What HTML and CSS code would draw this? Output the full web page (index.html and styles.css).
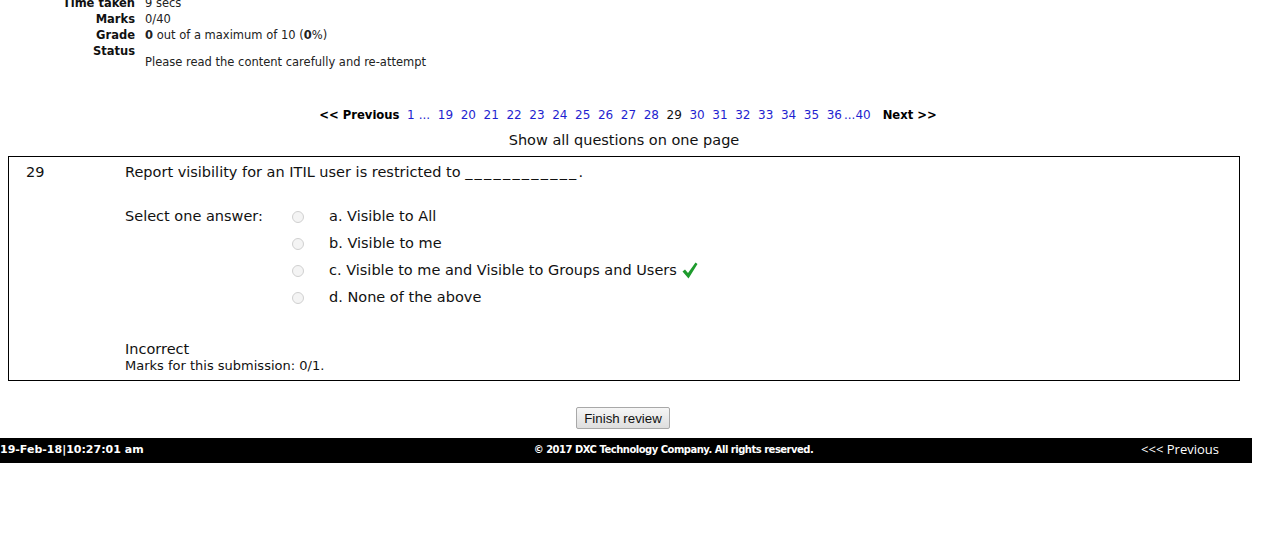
FILE: index.html
```html
<!DOCTYPE html>
<html>
<head>
<meta charset="utf-8">
<link rel="stylesheet" href="styles.css">
</head>
<body>
<div class="page">
  <div class="summary">
    <div class="lbl">Time taken</div><div class="val">9 secs</div>
    <div class="lbl">Marks</div><div class="val">0/40</div>
    <div class="lbl">Grade</div><div class="val"><b>0</b> out of a maximum of 10 (<b>0</b>%)</div>
    <div class="lbl">Status</div><div class="val status">Please read the content carefully and re-attempt</div>
  </div>

  <div class="paging">
    <span class="nav">&lt;&lt; Previous</span>
    <a class="pg">1</a><span class="dots">...</span>
    <a class="pg">19</a><a class="pg">20</a><a class="pg">21</a><a class="pg">22</a><a class="pg">23</a><a class="pg">24</a><a class="pg">25</a><a class="pg">26</a><a class="pg">27</a><a class="pg">28</a><span class="pg cur">29</span><a class="pg">30</a><a class="pg">31</a><a class="pg">32</a><a class="pg">33</a><a class="pg">34</a><a class="pg">35</a><a class="pg">36</a><span class="dots tail">...</span><a class="pg last">40</a>
    <span class="nav next">Next &gt;&gt;</span>
  </div>
  <div class="showall">Show all questions on one page</div>

  <div class="qbox">
    <div class="qnum">29</div>
    <div class="qbody">
      <div class="qtext">Report visibility for an ITIL user is restricted to <span class="blank">____________</span>.</div>
      <div class="answers">
        <div class="prompt">Select one answer:</div>
        <div class="opts">
          <div class="opt"><span class="radio"></span><span class="otext">a. Visible to All</span></div>
          <div class="opt"><span class="radio"></span><span class="otext">b. Visible to me</span></div>
          <div class="opt"><span class="radio"></span><span class="otext">c. Visible to me and Visible to Groups and Users</span>
            <svg class="tick" width="16" height="17" viewBox="0 0 16 17"><path d="M0.5 9.5 L3 7.5 L6 11 L13.5 0.5 L15.5 2 L6.5 16.5 Z" fill="#1e9b2d"/></svg>
          </div>
          <div class="opt"><span class="radio"></span><span class="otext">d. None of the above</span></div>
        </div>
      </div>
      <div class="result">Incorrect</div>
      <div class="marks">Marks for this submission: 0/1.</div>
    </div>
  </div>

  <div class="finish"><button class="btn">Finish review</button></div>
</div>
<div class="footer">
  <div class="fdate">19-Feb-18|10:27:01 am</div>
  <div class="fcopy">© 2017 DXC Technology Company. All rights reserved.</div>
  <div class="fprev">&lt;&lt;&lt; Previous</div>
</div>
</body>
</html>
```

FILE: styles.css
```css
html, body {
  margin: 0;
  padding: 0;
  background: #fff;
}
body {
  font-family: "DejaVu Sans", Verdana, sans-serif;
  color: #111;
  overflow: hidden;
}
.page {
  width: 1248px;
}
.summary {
  display: grid;
  grid-template-columns: 135px auto;
  column-gap: 10px;
  margin-top: -5px;
  font-size: 11.5px;
  line-height: 16px;
}
.lbl {
  text-align: right;
  font-weight: bold;
  font-size: 11.5px;
}
.val {
  color: #222;
}
.status {
  padding-top: 11px;
}
.paging {
  display: flex;
  justify-content: center;
  align-items: baseline;
  margin-top: 37px;
  padding-left: 8px;
  font-size: 12px;
  line-height: 16px;
}
.nav {
  font-weight: bold;
  font-size: 11.6px;
  color: #000;
}
.pg {
  color: #1f1fd0;
  margin-left: 7.6px;
}
.cur {
  color: #111;
}
.dots {
  color: #1f1fd0;
  margin-left: 4px;
}
.dots.tail {
  margin-left: 2px;
}
.pg.last {
  margin-left: 0;
}
.next {
  margin-left: 12px;
}
.showall {
  text-align: center;
  font-size: 14.5px;
  line-height: 18px;
  margin-top: 8px;
  color: #111;
}
.qbox {
  margin: 7px 0 0 8px;
  width: 1230px;
  border: 1px solid #000;
  display: flex;
  padding: 7px 0 6px 0;
  font-size: 14.5px;
  line-height: 17px;
}
.qnum {
  width: 116px;
  padding-left: 17px;
  box-sizing: border-box;
}
.qtext {
  margin-bottom: 27px;
}
.blank {
  letter-spacing: 2.2px;
}
.answers {
  display: flex;
}
.prompt {
  width: 160px;
}
.opt {
  display: flex;
  align-items: center;
  height: 27px;
  margin-top: -5px;
  margin-bottom: 5px;
}
.radio {
  width: 10px;
  height: 10px;
  border: 1px solid #d0d0d0;
  border-radius: 50%;
  background: #f4f4f4;
  margin-left: 7px;
  margin-right: 25px;
}
.tick {
  margin-left: 5px;
}
.result {
  margin-top: 25px;
}
.marks {
  font-size: 13px;
  line-height: 16px;
}
.finish {
  text-align: center;
  margin-top: 26px;
  padding-right: 2px;
}
.btn {
  font-family: "Liberation Sans", Arial, sans-serif;
  font-size: 13.3px;
  height: 22px;
  padding: 0 7px;
  border: 1px solid #a8a8a8;
  border-radius: 2px;
  background: linear-gradient(#f6f6f6, #dedede);
  color: #111;
}
.footer {
  width: 1252px;
  height: 25px;
  margin-top: 9px;
  background: #000;
  color: #fff;
  display: flex;
  align-items: center;
  justify-content: space-between;
}
.fdate {
  font-family: "DejaVu Sans", Tahoma, sans-serif;
  font-weight: bold;
  font-size: 11px;
  width: 300px;
  margin-top: -2px;
}
.fcopy {
  font-family: "DejaVu Sans", Tahoma, sans-serif;
  font-weight: bold;
  font-size: 10px;
  letter-spacing: -0.5px;
  margin-left: 95px;
  margin-top: -2px;
}
.fprev {
  font-family: "Open Sans", sans-serif;
  font-size: 13px;
  width: 300px;
  text-align: right;
  padding-right: 33px;
  box-sizing: border-box;
  margin-top: -4px;
}
```
